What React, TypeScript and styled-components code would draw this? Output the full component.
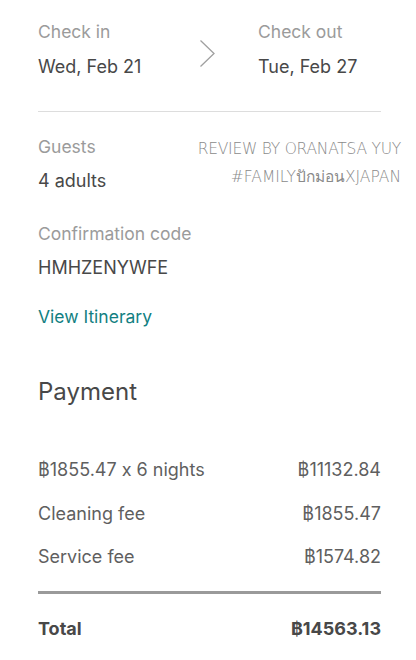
import React from "react";
import styled, { createGlobalStyle } from "styled-components";

const Global = createGlobalStyle`
  html, body { margin: 0; padding: 0; background: #ffffff; }
  body {
    font-family: Inter, "Noto Sans", sans-serif;
    font-feature-settings: "calt" 0;
    -webkit-font-smoothing: antialiased;
  }
`;

const Page = styled.div`
  width: 416px;
  height: 660px;
  box-sizing: border-box;
  padding: 22px 35px 0 38px;
  position: relative;
  overflow: hidden;
`;

const DatesRow = styled.div`
  display: grid;
  grid-template-columns: 162px 58px 1fr;
  align-items: start;
  padding-bottom: 32px;
  border-bottom: 1px solid #dddddd;
`;

const Field = styled.div<{ $gap?: number }>`
  display: flex;
  flex-direction: column;
  gap: 12.5px;
  margin-bottom: ${(p) => p.$gap ?? 0}px;
`;

const Label = styled.div`
  font-size: 17.5px;
  line-height: 20px;
  color: #9b9b9b;
`;

const Value = styled.div`
  font-size: 18px;
  line-height: 24px;
  color: #484848;
`;

const Chevron = styled.svg`
  width: 17px;
  height: 29px;
  margin-top: 17px;
  margin-left: -1px;
`;

const Details = styled.div`
  display: flex;
  flex-direction: column;
  padding-top: 25px;
`;

const Link = styled.a`
  font-size: 17.5px;
  line-height: 20px;
  color: #127f82;
  text-decoration: none;
`;

const Heading = styled.h2`
  margin: 50px 0 0;
  font-size: 24px;
  line-height: 30px;
  font-weight: 400;
  color: #484848;
`;

const Rows = styled.div`
  display: flex;
  flex-direction: column;
  gap: 19.5px;
  margin-top: 51.5px;
  padding-bottom: 21.5px;
  border-bottom: 3px solid #9a9a9a;
`;

const Row = styled.div<{ $bold?: boolean }>`
  display: flex;
  justify-content: space-between;
  font-size: 18px;
  line-height: 24px;
  color: ${(p) => (p.$bold ? "#484848" : "#5f5f5f")};
  font-weight: ${(p) => (p.$bold ? 700 : 400)};
`;

const TotalRow = styled(Row)`
  margin-top: 23px;
`;

const Watermark = styled.div`
  position: absolute;
  right: 15px;
  top: 140px;
  display: flex;
  flex-direction: column;
  align-items: flex-end;
  gap: 9px;
  font-family: "DejaVu Sans", "Noto Sans", sans-serif;
  font-weight: 200;
  font-size: 15.5px;
  line-height: 19px;
  color: #8a8a8a;
  pointer-events: none;
`;

const WatermarkLine = styled.span<{ $tight?: boolean }>`
  letter-spacing: ${(p) => (p.$tight ? "-0.25px" : "0")};
`;

export default function App() {
  return (
    <>
      <Global />
      <Page>
        <DatesRow>
          <Field>
            <Label>Check in</Label>
            <Value>Wed, Feb 21</Value>
          </Field>
          <Chevron viewBox="0 0 17 29" fill="none">
            <path d="M1.5 1.5 L15 14.5 L1.5 27.5" stroke="#a0a0a0" strokeWidth="1.3" />
          </Chevron>
          <Field>
            <Label>Check out</Label>
            <Value>Tue, Feb 27</Value>
          </Field>
        </DatesRow>
        <Details>
          <Field $gap={30.5}>
            <Label>Guests</Label>
            <Value>4 adults</Value>
          </Field>
          <Field $gap={26.5}>
            <Label>Confirmation code</Label>
            <Value>HMHZENYWFE</Value>
          </Field>
          <div>
            <Link href="#">View Itinerary</Link>
          </div>
        </Details>
        <Heading>Payment</Heading>
        <Rows>
          <Row>
            <span>฿1855.47 x 6 nights</span>
            <span>฿11132.84</span>
          </Row>
          <Row>
            <span>Cleaning fee</span>
            <span>฿1855.47</span>
          </Row>
          <Row>
            <span>Service fee</span>
            <span>฿1574.82</span>
          </Row>
        </Rows>
        <TotalRow $bold>
          <span>Total</span>
          <span>฿14563.13</span>
        </TotalRow>
        <Watermark>
          <WatermarkLine $tight>REVIEW BY ORANATSA YUY</WatermarkLine>
          <WatermarkLine>#FAMILYปักม่อนXJAPAN</WatermarkLine>
        </Watermark>
      </Page>
    </>
  );
}
